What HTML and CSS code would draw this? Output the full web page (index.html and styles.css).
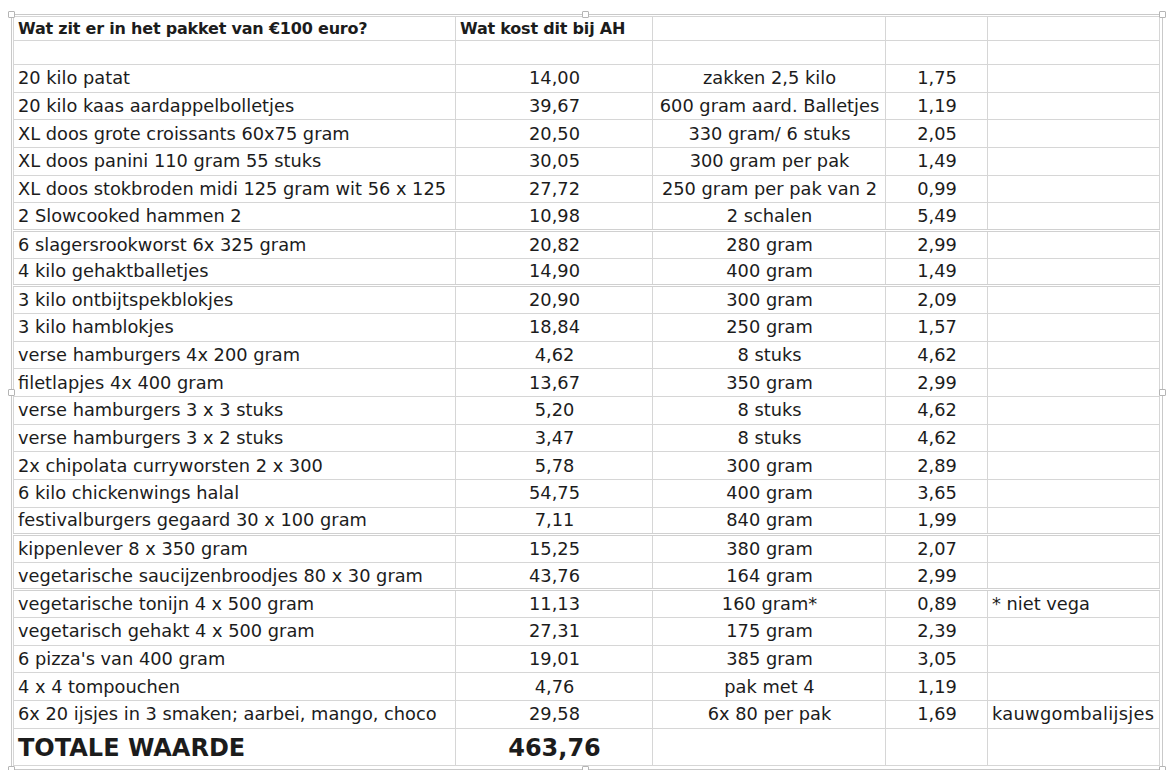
FILE: index.html
```html
<!DOCTYPE html>
<html lang="nl">
<head>
<meta charset="utf-8">
<title>Pakket</title>
<link rel="stylesheet" href="styles.css">
</head>
<body>
<div class="frame">
  <span class="handle h-tl"></span><span class="handle h-tm"></span><span class="handle h-tr"></span>
  <span class="handle h-ml"></span><span class="handle h-mr"></span>
  <span class="handle h-bl"></span><span class="handle h-bm"></span><span class="handle h-br"></span>
  <table class="sheet">
    <colgroup>
      <col class="c1"><col class="c2"><col class="c3"><col class="c4"><col class="c5">
    </colgroup>
    <tr class="head">
      <td class="bold">Wat zit er in het pakket van €100 euro?</td>
      <td class="bold">Wat kost dit bij AH</td>
      <td></td><td></td><td></td>
    </tr>
    <tr class="blank"><td></td><td></td><td></td><td></td><td></td></tr>
    <tr class="row"><td>20 kilo patat</td><td class="ctr">14,00</td><td class="ctr">zakken 2,5 kilo</td><td class="num">1,75</td><td></td></tr>
    <tr class="row"><td>20 kilo kaas aardappelbolletjes</td><td class="ctr">39,67</td><td class="ctr">600 gram aard. Balletjes</td><td class="num">1,19</td><td></td></tr>
    <tr class="row"><td>XL doos grote croissants 60x75 gram</td><td class="ctr">20,50</td><td class="ctr">330 gram/ 6 stuks</td><td class="num">2,05</td><td></td></tr>
    <tr class="row"><td>XL doos panini 110 gram 55 stuks</td><td class="ctr">30,05</td><td class="ctr">300 gram per pak</td><td class="num">1,49</td><td></td></tr>
    <tr class="row"><td>XL doos stokbroden midi 125 gram wit 56 x 125</td><td class="ctr">27,72</td><td class="ctr">250 gram per pak van 2</td><td class="num">0,99</td><td></td></tr>
    <tr class="row"><td>2 Slowcooked hammen 2</td><td class="ctr">10,98</td><td class="ctr">2 schalen</td><td class="num">5,49</td><td></td></tr>
    <tr class="row dbl"><td>6 slagersrookworst 6x 325 gram</td><td class="ctr">20,82</td><td class="ctr">280 gram</td><td class="num">2,99</td><td></td></tr>
    <tr class="row"><td>4 kilo gehaktballetjes</td><td class="ctr">14,90</td><td class="ctr">400 gram</td><td class="num">1,49</td><td></td></tr>
    <tr class="row dbl"><td>3 kilo ontbijtspekblokjes</td><td class="ctr">20,90</td><td class="ctr">300 gram</td><td class="num">2,09</td><td></td></tr>
    <tr class="row"><td>3 kilo hamblokjes</td><td class="ctr">18,84</td><td class="ctr">250 gram</td><td class="num">1,57</td><td></td></tr>
    <tr class="row"><td>verse hamburgers 4x 200 gram</td><td class="ctr">4,62</td><td class="ctr">8 stuks</td><td class="num">4,62</td><td></td></tr>
    <tr class="row"><td>filetlapjes 4x 400 gram</td><td class="ctr">13,67</td><td class="ctr">350 gram</td><td class="num">2,99</td><td></td></tr>
    <tr class="row"><td>verse hamburgers 3 x 3 stuks</td><td class="ctr">5,20</td><td class="ctr">8 stuks</td><td class="num">4,62</td><td></td></tr>
    <tr class="row"><td>verse hamburgers 3 x 2 stuks</td><td class="ctr">3,47</td><td class="ctr">8 stuks</td><td class="num">4,62</td><td></td></tr>
    <tr class="row"><td>2x chipolata curryworsten 2 x 300</td><td class="ctr">5,78</td><td class="ctr">300 gram</td><td class="num">2,89</td><td></td></tr>
    <tr class="row"><td>6 kilo chickenwings halal</td><td class="ctr">54,75</td><td class="ctr">400 gram</td><td class="num">3,65</td><td></td></tr>
    <tr class="row"><td>festivalburgers gegaard 30 x 100 gram</td><td class="ctr">7,11</td><td class="ctr">840 gram</td><td class="num">1,99</td><td></td></tr>
    <tr class="row dbl"><td>kippenlever 8 x 350 gram</td><td class="ctr">15,25</td><td class="ctr">380 gram</td><td class="num">2,07</td><td></td></tr>
    <tr class="row"><td>vegetarische saucijzenbroodjes 80 x 30 gram</td><td class="ctr">43,76</td><td class="ctr">164 gram</td><td class="num">2,99</td><td></td></tr>
    <tr class="row dbl"><td>vegetarische tonijn 4 x 500 gram</td><td class="ctr">11,13</td><td class="ctr">160 gram*</td><td class="num">0,89</td><td>* niet vega</td></tr>
    <tr class="row"><td>vegetarisch gehakt 4 x 500 gram</td><td class="ctr">27,31</td><td class="ctr">175 gram</td><td class="num">2,39</td><td></td></tr>
    <tr class="row"><td>6 pizza's van 400 gram</td><td class="ctr">19,01</td><td class="ctr">385 gram</td><td class="num">3,05</td><td></td></tr>
    <tr class="row"><td>4 x 4 tompouchen</td><td class="ctr">4,76</td><td class="ctr">pak met 4</td><td class="num">1,19</td><td></td></tr>
    <tr class="row"><td>6x 20 ijsjes in 3 smaken; aarbei, mango, choco</td><td class="ctr">29,58</td><td class="ctr">6x 80 per pak</td><td class="num">1,69</td><td class="wide">kauwgombalijsjes</td></tr>
    <tr class="total"><td class="big">TOTALE WAARDE</td><td class="ctr big">463,76</td><td></td><td></td><td></td></tr>
  </table>
</div>
</body>
</html>
```

FILE: styles.css
```css
html, body {
  margin: 0;
  padding: 0;
  background: #ffffff;
}

body {
  font-family: "DejaVu Sans", "Liberation Sans", sans-serif;
  color: #1c1c1c;
}

.frame {
  position: relative;
  margin: 14px 6px 0 11px;
  border: 1px solid #c9c9c9;
  padding: 1px 3px 3px 1px;
  width: 1146px;
}

.handle {
  position: absolute;
  width: 5px;
  height: 5px;
  background: #ffffff;
  border: 1px solid #b5b5b5;
  border-radius: 1px;
}
.h-tl { left: -4px; top: -4px; }
.h-tm { left: 570px; top: -4px; }
.h-tr { right: -4px; top: -4px; }
.h-ml { left: -4px; top: 374px; }
.h-mr { right: -4px; top: 374px; }
.h-bl { left: -4px; bottom: -4px; }
.h-bm { left: 570px; bottom: -4px; }
.h-br { right: -4px; bottom: -4px; }

.sheet {
  border-collapse: collapse;
  table-layout: fixed;
  width: 1146px;
  font-size: 17.8px;
  line-height: 18px;
}

.c1 { width: 442px; }
.c2 { width: 197px; }
.c3 { width: 233px; }
.c4 { width: 102px; }
.c5 { width: 172px; }

.sheet td {
  border: 1px solid #d6d6d6;
  padding: 0 3px 0 4px;
  white-space: nowrap;
  overflow: hidden;
  vertical-align: middle;
}

.head { height: 24px; }
.blank { height: 24px; }
.row { height: 27.67px; }
.row.dbl { height: 27.67px; }
.row.dbl td { border-top: 3px double #d0d0d0; }
.total { height: 37px; }

.bold {
  font-weight: bold;
  font-size: 16px;
  letter-spacing: -0.2px;
}

.ctr { text-align: center; }
.num { text-align: center; padding-left: 8px; }
.wide { letter-spacing: 0.3px; }

.sheet td.big {
  font-weight: bold;
  font-size: 24px;
  line-height: 28px;
  padding-top: 3px;
}
```
